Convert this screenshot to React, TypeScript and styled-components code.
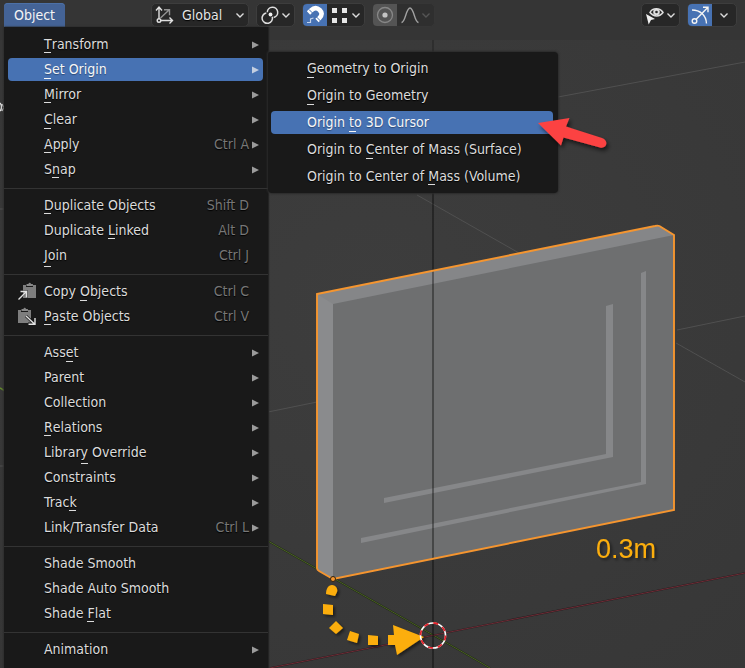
import React from "react";
import styled, { createGlobalStyle } from "styled-components";

const GlobalStyle = createGlobalStyle`
  * { box-sizing: border-box; }
  body { margin: 0; background: #3a3a3a; }
  body, button, select {
    font-family: "DejaVu Sans Condensed", "DejaVu Sans", sans-serif;
    font-size: 14px;
    line-height: 23px;
    color: #dedede;
  }
  button, select { border: 0; margin: 0; padding: 0; background: none; }
`;

const Page = styled.main`
  position: relative;
  height: 100vh;
  overflow: hidden;
  display: flex;
  flex-direction: column;
  align-items: stretch;
`;

const SceneSvg = styled.svg`
  position: absolute;
  inset: 0;
  width: 100%;
  height: 100%;
`;

const Header = styled.header`
  position: relative;
  display: flex;
  align-items: flex-end;
  gap: 7px;
  height: 27px;
  padding: 0 8px 0 4px;
`;

const MenuTitle = styled.button`
  height: 24px;
  padding: 0 10px;
  margin-right: 79px;
  border-radius: 4px 4px 0 0;
  background: #446396;
  color: #f4f4f4;
  box-shadow: inset 0 1px #4c70a6;
`;

const Control = styled.div<{ $dim?: boolean }>`
  display: flex;
  align-items: center;
  height: 24px;
  overflow: hidden;
  border: 1px solid ${(p) => (p.$dim ? "#363636" : "#3d3d3d")};
  border-radius: 5px;
  background: ${(p) => (p.$dim ? "#2f2f2f" : "#272727")};
`;

const IconButton = styled.button<{ $fill?: string; $wide?: boolean }>`
  display: flex;
  align-items: center;
  justify-content: center;
  gap: 1px;
  min-width: 24px;
  height: 22px;
  padding: 0 ${(p) => (p.$wide ? "3px" : "1px")};
  background: ${(p) => p.$fill || "transparent"};
`;

const Orientation = styled.label`
  display: flex;
  align-items: center;
  padding: 0 3px;
`;

const OrientationSelect = styled.select`
  appearance: none;
  width: 53px;
  height: 22px;
  margin-left: 7px;
  color: #e6e6e6;
  text-shadow: 0 1px 1px #000;
`;

const RightTools = styled.div`
  display: flex;
  gap: 7px;
  margin-left: auto;
`;

const Menu = styled.nav`
  position: relative;
  flex: 1 0 auto;
  align-self: flex-start;
  display: flex;
  flex-direction: column;
  gap: 2px;
  width: 264px;
  margin-left: 4px;
  padding: 6px 5px 6px 4px;
  background: #191919;
  box-shadow: 1px 0 1px #242424, -1px 0 2px #2c2c2c;
`;

const Divider = styled.hr`
  width: calc(100% + 9px);
  height: 1px;
  margin: 5px -5px 3px -4px;
  border: 0;
  background: #333333;
`;

const ItemWrap = styled.div`
  position: relative;
`;

const Item = styled.button<{ $active?: boolean }>`
  display: flex;
  align-items: center;
  width: 100%;
  height: 23px;
  padding: 0 4px 0 8px;
  border-radius: 4px;
  text-align: left;
  white-space: nowrap;
  color: ${(p) => (p.$active ? "#f6f6f6" : "#dcdcdc")};
  background: ${(p) => (p.$active ? "#4772b3" : "transparent")};
  text-shadow: 0 1px 1px ${(p) => (p.$active ? "#2d4a78" : "#000")};
`;

const IconSlot = styled.span`
  display: flex;
  flex: none;
  width: 28px;
`;

const Shortcut = styled.span`
  margin-left: auto;
  padding-right: 3px;
  color: #777777;
`;

const ArrowSlot = styled.span`
  display: flex;
  width: 7px;
`;

const Label = styled.span`
  flex: 1;
`;

const Mnemonic = styled.span<{ $drop: number }>`
  position: relative;
  &::after {
    content: "";
    position: absolute;
    left: 0;
    bottom: -${(p) => p.$drop}px;
    width: 7px;
    height: 1px;
    background: currentColor;
  }
`;

const Submenu = styled.div`
  position: absolute;
  z-index: 2;
  left: calc(100% + 5px);
  top: -6px;
  display: flex;
  flex-direction: column;
  gap: 4px;
  width: 290px;
  padding: 5px 5px 5px 3px;
  border-radius: 2px 4px 4px 4px;
  background: #191919;
  box-shadow: 0 0 2px 1px #2b2b2b;
`;

const PointerSvg = styled.svg`
  position: absolute;
  right: -63px;
  top: 0;
  pointer-events: none;
`;

const Chevron = ({ color = "#dcdcdc" }: { color?: string }) => (
  <svg width="10" height="12" viewBox="0 0 10 12" fill="none" stroke={color} strokeWidth="1.4">
    <path d="M1.500 4.500 5 8l3.500-3.500" />
  </svg>
);

const AxesIcon = () => (
  <svg width="20" height="20" viewBox="0 0 20 20" fill="none" stroke="#e0e0e0" strokeWidth="1.4">
    <path d="M4 13.500V3M1 5.500 4 2l3 3.500M6 15.500h11M14.500 12.500l3 3-3 3" />
    <circle cx="4" cy="15.500" r="1.800" />
    <path d="m5.500 13 8.500-8M9 4.800h5.500v5.500" stroke="#929292" />
  </svg>
);

const PivotIcon = () => (
  <svg width="20" height="20" viewBox="0 0 20 20" fill="none" stroke="#dedede" strokeWidth="1.500">
    <path d="M7.300 7.200A5.200 5.200 0 1 1 13.700 12.400" />
    <path d="M12.300 11.800A5.200 5.200 0 1 1 6.300 8" />
    <circle cx="10.500" cy="9.500" r="1.900" fill="#f2f2f2" stroke="none" />
  </svg>
);

const MagnetIcon = () => (
  <svg width="22" height="22" viewBox="0 0 22 22" fill="none">
    <path d="M4.500 9 7 6.500C10 3.500 13 3.500 15.700 6c2.800 2.800 2.300 5.500-.5 8.300L13 16.500" stroke="#fff" strokeWidth="4.600" />
    <path d="m5 5.500 4.500 4.500M12 12.500l4.500 4.500" stroke="#4772b3" strokeWidth="1" />
    <path d="M3 18.500h3.500v-3.500l3-1" stroke="#c5d3e9" strokeWidth="1.200" />
  </svg>
);

const SnapGridIcon = () => (
  <svg width="20" height="20" viewBox="0 0 20 20" fill="#e8e8e8">
    <path d="M2 3h5v5H2zM12 3h5v5h-5zM2 13h5v5H2zM12 13h5v5h-5z" />
  </svg>
);

const ProportionalIcon = () => (
  <svg width="22" height="22" viewBox="0 0 22 22">
    <circle cx="11" cy="11" r="7.500" fill="none" stroke="#878787" strokeWidth="1.300" />
    <circle cx="11" cy="11" r="2.600" fill="#c4c4c4" />
  </svg>
);

const FalloffIcon = () => (
  <svg width="20" height="20" viewBox="0 0 20 20" fill="none" stroke="#a0a0a0" strokeWidth="1.400">
    <path d="M1.500 17.500C5.500 17.500 6 3 10 3s4.500 14.500 8.500 14.500" />
  </svg>
);

const VisibilityIcon = () => (
  <svg width="20" height="20" viewBox="0 0 20 20">
    <path d="M5 7.500C7.500 2.500 15 2.500 18 7.500 15 12 8.500 12 5 7.500Z" fill="none" stroke="#dedede" strokeWidth="1.500" />
    <circle cx="11.500" cy="7" r="3.300" fill="#dedede" />
    <circle cx="11.500" cy="7" r="1.300" fill="#272727" />
    <path d="m1 9 9 5-4 1-2.300 4.500Z" fill="#f0f0f0" />
  </svg>
);

const GizmoIcon = () => (
  <svg width="22" height="22" viewBox="0 0 22 22" fill="none" stroke="#f4f4f4" strokeWidth="1.400">
    <circle cx="5.500" cy="17" r="2.300" />
    <path d="m7.200 15.300 11.300-11.500M14 3.300h5v5M3 6c8 0 14 5 14.500 13.500" />
  </svg>
);

const SubArrow = ({ color }: { color: string }) => (
  <svg width="7" height="8" viewBox="0 0 7 8">
    <path d="M0 .5 7 4 0 7.500Z" fill={color} />
  </svg>
);

const ClipboardShape = ({ x }: { x: number }) => (
  <g transform={`translate(${x} 0)`}>
    <path d="M0 3h3v2h7V3h3v13H0Z" fill="#7e7e7e" />
    <path d="M3.500 4V2h2a1.200 1.200 0 0 1 2.400 0h2v2Z" fill="#888888" />
  </g>
);

const CopyIcon = () => (
  <svg width="20" height="20" viewBox="0 0 20 20" fill="none">
    <ClipboardShape x={7} />
    <path d="m2.500 17.500 8-8M4 9h7v7" stroke="#191919" strokeWidth="2" strokeOpacity=".5" />
    <path d="m2.500 17.500 7.500-7.500M4.500 9.500h6v6" stroke="#e2e2e2" strokeWidth="1.400" />
  </svg>
);

const PasteIcon = () => (
  <svg width="20" height="20" viewBox="0 0 20 20" fill="none">
    <ClipboardShape x={2} />
    <path d="m10 9 8 7.500M12 17h7v-7" stroke="#191919" strokeWidth="3" />
    <path d="m10 9 8.500 8M12.500 17.300h6.500v-6.300" stroke="#e2e2e2" strokeWidth="1.400" />
  </svg>
);

const Pointer = () => (
  <PointerSvg width="80" height="50" viewBox="0 0 80 50" aria-hidden="true">
    <defs>
      <filter id="pointerShadow" x="-20%" y="-20%" width="150%" height="160%">
        <feDropShadow dx="2" dy="3" stdDeviation="2" floodColor="#000" floodOpacity=".6" />
      </filter>
    </defs>
    <path
      d="M2 12 33.500 7 30 15.500 66 27c7 2.500 5 11-2 9.500L27.500 26.500 25 34.500Z"
      fill="#fc4343"
      filter="url(#pointerShadow)"
    />
  </PointerSvg>
);

const Scene = () => (
  <SceneSvg viewBox="0 0 745 668" preserveAspectRatio="xMinYMin slice" role="img" aria-label="3D viewport">
    <defs>
      <radialGradient id="backdrop" cx=".5" cy=".45" r=".75">
        <stop offset="0" stopColor="#3d3d3d" />
        <stop offset="1" stopColor="#373737" />
      </radialGradient>
      <filter id="shade" x="-20%" y="-20%" width="150%" height="150%">
        <feDropShadow dx="2" dy="2" stdDeviation="1.500" floodColor="#000" floodOpacity=".5" />
      </filter>
    </defs>
    <rect width="745" height="668" fill="url(#backdrop)" />
    <rect width="745" height="40" fill="#353535" />
    <g stroke="#505050" strokeWidth="1" fill="none">
      <path d="M558 97 745 62M417 195 519 253M676 343l69 39M677 330l68-14M268 412l49-10M0 209h4M0 466h4" />
    </g>
    <path d="m0 388 5 3" stroke="#668c2c" strokeWidth="1.500" />
    <path d="M0 103c2 2 2 6 0 8M2 104l4 7M6 104l-4 7" stroke="#e2e2e2" strokeWidth="1.400" fill="none" />
    <path d="M268 541 433 635l57 33" stroke="#1e2616" strokeWidth="1.600" />
    <path d="M268 541 433 635l57 33" stroke="#5b7a28" strokeWidth="1" strokeOpacity=".75" />
    <path d="M270 668 745 573" stroke="#22181a" strokeWidth="1.600" />
    <path d="M270 668 745 573" stroke="#8c3442" strokeWidth="1" strokeOpacity=".7" />

    <path d="M317 294 655 226h5l14 9v275L333 579l-16-9Z" fill="#858688" />
    <path d="M317 294 333 304v275l-16-9Z" fill="#8a8b8d" />
    <path d="M333 304 674 235v275L333 579Z" fill="#6e6f70" />
    <path d="m606 306 7-2v153l-229 46v-5l222-44ZM641 273l5-2v213l-285 59v-5l280-56Z" fill="#868789" />
    <path d="M433 40V52" stroke="#000" strokeOpacity=".2" strokeWidth="2" />
    <path d="M433 52V668" stroke="#000" strokeOpacity=".36" strokeWidth="2" />
    <path
      d="M317 294 655 226q4-1 6 1l13 8v275L333 579l-14-8q-2-1-2-3Z"
      fill="none"
      stroke="#f5952f"
      strokeWidth="1.900"
    />
    <circle cx="333" cy="579" r="2.500" fill="#f5952f" stroke="#30220f" />

    <g fill="#fcae0c" filter="url(#shade)">
      <path d="M326 594c0-5 2-9 6-9s6 4 5 7l-2 4Z" />
      <path d="m323 604 10 1v10l-10-1Z" />
      <path d="m336 621 7 7-7 6-7-6Z" />
      <path d="m350 631 9 3-2 9-10-3Z" />
      <path d="m368 635 10 1v9h-10Z" />
      <path d="M388 635h6l-1-10 31 12-27 18-2-10h-7Z" />
    </g>
    <circle cx="433" cy="635.500" r="12.500" fill="none" stroke="#fff" strokeWidth="1.600" />
    <circle cx="433" cy="635.500" r="12.500" fill="none" stroke="#e1232b" strokeWidth="1.800" strokeDasharray="4.900 4.918" />
    <text x="596" y="558" fontFamily="Liberation Sans, Arial, sans-serif" fontSize="27" fill="#fcae0c" filter="url(#shade)">
      0.3m
    </text>
  </SceneSvg>
);

type Entry = {
  text: string;
  mark?: number;
  keys?: string;
  sub?: boolean;
  icon?: React.ReactNode;
  active?: boolean;
};

const originEntries: Entry[] = [
  { text: "Geometry to Origin", mark: 0 },
  { text: "Origin to Geometry", mark: 0 },
  { text: "Origin to 3D Cursor", mark: 7, active: true },
  { text: "Origin to Center of Mass (Surface)", mark: 10 },
  { text: "Origin to Center of Mass (Volume)", mark: 20 },
];

const sections: Entry[][] = [
  [
    { text: "Transform", mark: 0, sub: true },
    { text: "Set Origin", mark: 0, sub: true, active: true },
    { text: "Mirror", mark: 0, sub: true },
    { text: "Clear", mark: 0, sub: true },
    { text: "Apply", mark: 0, sub: true, keys: "Ctrl A" },
    { text: "Snap", mark: 1, sub: true },
  ],
  [
    { text: "Duplicate Objects", mark: 0, keys: "Shift D" },
    { text: "Duplicate Linked", mark: 10, keys: "Alt D" },
    { text: "Join", mark: 0, keys: "Ctrl J" },
  ],
  [
    { text: "Copy Objects", mark: 5, keys: "Ctrl C", icon: <CopyIcon /> },
    { text: "Paste Objects", mark: 0, keys: "Ctrl V", icon: <PasteIcon /> },
  ],
  [
    { text: "Asset", mark: 3, sub: true },
    { text: "Parent", sub: true },
    { text: "Collection", sub: true },
    { text: "Relations", mark: 0, sub: true },
    { text: "Library Override", mark: 6, sub: true },
    { text: "Constraints", sub: true },
    { text: "Track", mark: 4, sub: true },
    { text: "Link/Transfer Data", sub: true, keys: "Ctrl L" },
  ],
  [{ text: "Shade Smooth" }, { text: "Shade Auto Smooth" }, { text: "Shade Flat", mark: 6 }],
  [{ text: "Animation", sub: true }],
];

const dropFor = (letter: string) => ("Jy".includes(letter) ? 4 : "CGOSet".includes(letter) ? 2 : 1);

const MenuItem = ({ entry }: { entry: Entry }) => {
  const { text, mark, keys, sub, icon, active } = entry;
  return (
    <Item type="button" $active={active}>
      <IconSlot>{icon}</IconSlot>
      <Label>
        {mark === undefined ? (
          text
        ) : (
          <>
            {text.slice(0, mark)}
            <Mnemonic $drop={dropFor(text[mark])}>{text[mark]}</Mnemonic>
            {text.slice(mark + 1)}
          </>
        )}
      </Label>
      {keys && <Shortcut>{keys}</Shortcut>}
      <ArrowSlot>{sub && <SubArrow color={active ? "#c3cee0" : "#9b9b9b"} />}</ArrowSlot>
    </Item>
  );
};

export default function App() {
  return (
    <Page>
      <GlobalStyle />
      <Scene />
      <Header>
        <MenuTitle type="button">Object</MenuTitle>
        <Control>
          <Orientation>
            <AxesIcon />
            <OrientationSelect aria-label="Transform orientation" defaultValue="Global">
              <option>Global</option>
            </OrientationSelect>
            <Chevron />
          </Orientation>
        </Control>
        <Control>
          <IconButton type="button" $wide aria-label="Pivot point">
            <PivotIcon />
            <Chevron />
          </IconButton>
        </Control>
        <Control>
          <IconButton type="button" $fill="#4772b3" aria-label="Snap">
            <MagnetIcon />
          </IconButton>
          <IconButton type="button" $wide aria-label="Snap to">
            <SnapGridIcon />
            <Chevron />
          </IconButton>
        </Control>
        <Control $dim>
          <IconButton type="button" $fill="#545454" aria-label="Proportional editing">
            <ProportionalIcon />
          </IconButton>
          <IconButton type="button" $wide aria-label="Falloff">
            <FalloffIcon />
            <Chevron color="#555555" />
          </IconButton>
        </Control>
        <RightTools>
          <Control>
            <IconButton type="button" $wide aria-label="Visibility">
              <VisibilityIcon />
              <Chevron />
            </IconButton>
          </Control>
          <Control>
            <IconButton type="button" $fill="#4772b3" aria-label="Gizmos">
              <GizmoIcon />
            </IconButton>
            <IconButton type="button" $wide aria-label="Gizmo options">
              <Chevron />
            </IconButton>
          </Control>
        </RightTools>
      </Header>
      <Menu aria-label="Object menu">
        {sections.map((section, index) => (
          <React.Fragment key={index}>
            {index > 0 && <Divider />}
            {section.map((entry) => (
              <ItemWrap key={entry.text}>
                <MenuItem entry={entry} />
                {entry.text === "Set Origin" && (
                  <Submenu>
                    {originEntries.map((origin) => (
                      <ItemWrap key={origin.text}>
                        <MenuItem entry={origin} />
                        {origin.active && <Pointer />}
                      </ItemWrap>
                    ))}
                  </Submenu>
                )}
              </ItemWrap>
            ))}
          </React.Fragment>
        ))}
      </Menu>
    </Page>
  );
}
